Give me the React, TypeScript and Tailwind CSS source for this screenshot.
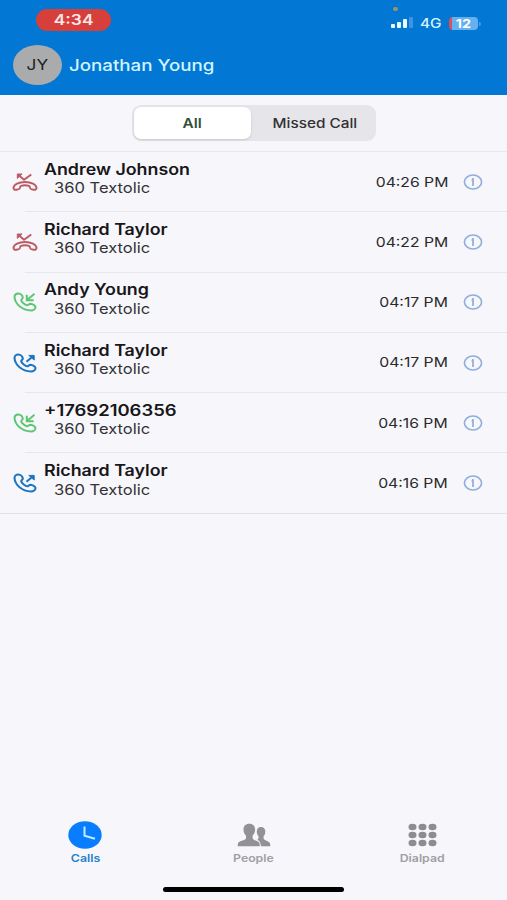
import React, { useState } from 'react'

type CallType = 'missed' | 'incoming' | 'outgoing'

type Call = {
  name: string
  line: string
  time: string
  type: CallType
}

const calls: Call[] = [
  { name: 'Andrew Johnson', line: '360 Textolic', time: '04:26 PM', type: 'missed' },
  { name: 'Richard Taylor', line: '360 Textolic', time: '04:22 PM', type: 'missed' },
  { name: 'Andy Young', line: '360 Textolic', time: '04:17 PM', type: 'incoming' },
  { name: 'Richard Taylor', line: '360 Textolic', time: '04:17 PM', type: 'outgoing' },
  { name: '+17692106356', line: '360 Textolic', time: '04:16 PM', type: 'incoming' },
  { name: 'Richard Taylor', line: '360 Textolic', time: '04:16 PM', type: 'outgoing' },
]

const handset =
  'M5.5 1.5C3 1.5 1.5 3 1.5 5C2 12 9 18 18 18.5C20.5 18.5 22.5 17 22.5 15C22.5 13.5 19.5 12 17.5 11.8C16 11.8 15.5 13.3 14 13.3C12 13 8.5 10 8.2 8.3C8.2 7.3 9.8 6.8 9.8 5.5C9.5 3.5 7.5 1.5 5.5 1.5Z'

const CallIcon: React.FC<{ type: CallType }> = ({ type }) => {
  switch (type) {
    case 'missed':
      return (
        <svg viewBox="0 0 27 20" className="w-[26px] h-5" fill="none" stroke="#bb5c65" strokeWidth="2" strokeLinejoin="round">
          <path d="M13.5 10C7 10 2 12.5 1.5 16C1.5 18 3 18.3 4.5 18L7 17.4C8.5 17 8.5 15.5 8.8 14.2C12 13.2 15 13.2 18.2 14.2C18.5 15.5 18.5 17 20 17.4L22.5 18C24 18.3 25.5 18 25.5 16C25 12.5 20 10 13.5 10Z" />
          <path d="M7 3l5.5 4.7L20 2.2" />
          <path d="M5.5 1.7h5l-5 4.600z" fill="#bb5c65" strokeWidth="1" />
        </svg>
      )
    case 'incoming':
      return (
        <svg viewBox="0 0 24 20" className="w-6 h-5" fill="none" stroke="#5cc673" strokeWidth="2">
          <path d={handset} />
          <path d="M21.5 1.800l-7.500 6.200M13.800 2.800v5.400h6.900" />
        </svg>
      )
    default:
      return (
        <svg viewBox="0 0 24 20" className="w-6 h-5" fill="none" stroke="#1d76c0" strokeWidth="2.1">
          <path d={handset} />
          <path d="M13.500 8.800l6.500-5.600" />
          <path d="M15.800 2.400h5.400v4.700z" fill="#1d76c0" strokeWidth="1" />
        </svg>
      )
  }
}

const StatusBar = () => (
  <div className="flex justify-between h-10 pl-9 pr-[26px]">
    <div className="flex items-center justify-center w-[75px] h-[22px] mt-[9px] rounded-full bg-[#d63f3a] text-[#ffe9ec] text-[14.5px] font-semibold">
      <span className="scale-x-[1.2]">4:34</span>
    </div>
    <div className="relative flex items-center h-[23px] mt-3">
      <div className="absolute left-[2px] -top-[5px] w-[5px] h-[4px] rounded-full bg-[#9a9270]" />
      <div className="flex items-end gap-[2px] h-[11px] -mt-px mb-px">
        <div className="w-1 h-1 rounded-[1px] bg-[#e8fbff]" />
        <div className="w-1 h-[6px] rounded-[1px] bg-[#e8fbff]" />
        <div className="w-1 h-[9px] rounded-[1px] bg-[#e8fbff]" />
        <div className="w-1 h-[11px] rounded-[1px] bg-[#3c94e2]" />
      </div>
      <span className="w-[22px] ml-[7px] text-[13px] font-medium text-[#d4f3ff] origin-left scale-x-[1.18]">4G</span>
      <div className="flex items-center justify-center w-[29px] h-[13px] ml-[7px] rounded-[4px] bg-linear-to-r from-[#d8505c] from-12% to-[#65b1ef] to-12% text-[12px] font-bold text-white">
        <span className="scale-x-[1.2]">12</span>
      </div>
      <div className="w-[2px] h-[4px] ml-px rounded-r-full bg-[#4b9ee8]" />
    </div>
  </div>
)

const Header = () => (
  <header className="h-[95px] bg-[#0277d4]">
    <StatusBar />
    <div className="flex items-center h-[50px] pl-[13px]">
      <div className="flex items-center justify-center w-[49px] h-10 rounded-[50%] bg-[#a9abad] text-[15px] text-[#222]">
        <span className="scale-x-[1.15]">JY</span>
      </div>
      <span className="ml-[7px] text-[16px] font-medium text-[#d2f4ff] origin-left scale-x-[1.17]">Jonathan Young</span>
    </div>
  </header>
)

const InfoIcon = () => (
  <svg viewBox="0 0 20 16" className="w-5 h-4" fill="none" stroke="#8eaede">
    <ellipse cx="10" cy="8" rx="8.6" ry="7" strokeWidth="1.6" />
    <path d="M10 4v8M8.500 6h1.500" strokeWidth="1.7" />
  </svg>
)

const CallRow: React.FC<{ call: Call; last: boolean }> = ({ call, last }) => (
  <li className="flex flex-col h-[60.3px]">
    <div className="flex items-center grow pl-[11px] pr-6">
      <div className="flex items-center justify-center w-[27px]">
        <CallIcon type={call.type} />
      </div>
      <div className="ml-[6px] mb-[5px] grow leading-[18.5px]">
        <div
          className={
            call.name.startsWith('+')
              ? 'text-[15.5px] font-semibold text-[#17171a] origin-left scale-x-[1.19]'
              : 'text-[15.5px] font-semibold text-[#17171a] origin-left scale-x-[1.15]'
          }
        >
          {call.name}
        </div>
        <div className="ml-[10px] text-[14.5px] text-[#333337] origin-left scale-x-[1.14]">{call.line}</div>
      </div>
      <span className="text-[13.5px] text-[#29292c] origin-right scale-x-[1.165]">{call.time}</span>
      <div className="ml-[15px]">
        <InfoIcon />
      </div>
    </div>
    <div className={last ? 'h-px bg-[#e2e1e6]' : 'h-px ml-[25px] bg-[#e7e6eb]'} />
  </li>
)

const ClockIcon = () => (
  <svg viewBox="0 0 34 28" className="w-[34px] h-7">
    <ellipse cx="17" cy="14" rx="16.7" ry="13.7" fill="#087dff" />
    <path d="M16.500 5.500v9.300l10.500 3" fill="none" stroke="#c2ecff" strokeWidth="2" />
  </svg>
)

const PeopleIcon = () => (
  <svg viewBox="0 0 34 24" className="w-[34px] h-6" fill="#929194">
    <path d="M24 4C21.3 4 19.8 5.8 19.8 8.6C19.8 10.8 20.6 12.2 21.5 13.2V15.2C21.5 16 20.5 16.3 20 16.6C22.3 17.6 23.6 19.3 23.9 23.3H33.2V21.2C33.2 18.2 26.6 17.5 26.6 15.6V13.2C27.6 12.2 28.3 10.8 28.3 8.6C28.3 5.8 26.7 4 24 4Z" />
    <path d="M12.3 .7C8.5 .7 6.5 3 6.5 6.5C6.5 9.3 7.5 11.3 9 12.5V15.3C9 17.6 .8 17.6 .8 21.2V23.3H22.7V21.2C22.7 17.6 15.6 17.6 15.6 15.3V12.5C17.1 11.3 18.1 9.3 18.1 6.5C18.1 3 16.1 .7 12.3 .7Z" />
  </svg>
)

const DialpadIcon = () => (
  <svg viewBox="0 0 29 24" className="w-[29px] h-6" fill="#8d8c90">
    {[4, 12, 20].map((cy) =>
      [4.5, 14.5, 24.5].map((cx) => <ellipse key={`${cx}-${cy}`} cx={cx} cy={cy} rx="4" ry="3.2" />),
    )}
  </svg>
)

const tabs = [
  { label: 'Calls', icon: <ClockIcon /> },
  { label: 'People', icon: <PeopleIcon /> },
  { label: 'Dialpad', icon: <DialpadIcon /> },
]

const App = () => {
  const [filter, setFilter] = useState('All')

  const visible = filter === 'All' ? calls : calls.filter((c) => c.type === 'missed')

  return (
    <div className="flex flex-col w-full h-[900px] bg-[#f7f6fa] font-['Inter','Liberation_Sans',sans-serif]">
      <Header />
      <div className="flex justify-center h-[57px] pt-[10px] border-b border-[#e9e8ed]">
        <div className="flex w-[244px] h-9 p-[2px] rounded-[9px] bg-[#e6e5e9] text-[13px] font-medium">
          {['All', 'Missed Call'].map((item) => (
            <button
              key={item}
              onClick={() => setFilter(item)}
              className={
                filter === item
                  ? 'w-[117px] pt-[2px] rounded-[7px] bg-white text-[#2f5037] font-semibold shadow-sm'
                  : 'grow pt-[2px] pl-[6px] text-[#303033]'
              }
            >
              <span className="inline-block scale-x-[1.18]">{item}</span>
            </button>
          ))}
        </div>
      </div>
      <ul>
        {visible.map((call, i) => (
          <CallRow key={i} call={call} last={i === visible.length - 1} />
        ))}
      </ul>
      <nav className="grid grid-cols-3 mt-auto h-[66px]">
        {tabs.map(({ label, icon }, i) => (
          <div
            key={label}
            className={
              i === 0
                ? 'flex flex-col items-center text-[#2682cb]'
                : 'flex flex-col items-center text-[#a09fa3]'
            }
          >
            <div className="flex items-center justify-center h-7">{icon}</div>
            <span
              className={
                i === 0
                  ? 'mt-[2px] ml-[3px] text-[10.5px] leading-4 font-semibold scale-x-[1.18]'
                  : 'mt-[2px] text-[10.5px] leading-4 font-semibold scale-x-[1.17]'
              }
            >
              {label}
            </span>
          </div>
        ))}
      </nav>
      <div className="w-[181px] h-[5px] mb-2 mx-auto rounded-full bg-black" />
    </div>
  )
}

export default App
